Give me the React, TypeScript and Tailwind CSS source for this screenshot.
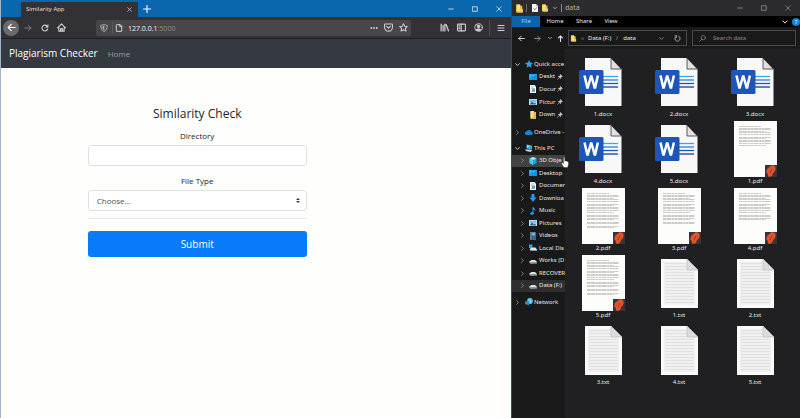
import React, { useState } from "react";

type SvgProps = { className?: string };

/* ---------- Browser toolbar icons ---------- */

const stroke = {
  fill: "none",
  stroke: "currentColor",
  strokeLinecap: "round" as const,
  strokeLinejoin: "round" as const,
};

const ArrowLeft = ({ className }: SvgProps) => (
  <svg viewBox="0 0 16 16" className={className} {...stroke} strokeWidth="2">
    <path d="M14.5 8H2M7.5 2.5 2 8l5.5 5.5" />
  </svg>
);
const ArrowRight = ({ className }: SvgProps) => (
  <svg viewBox="0 0 16 16" className={className} {...stroke} strokeWidth="2">
    <path d="M1.500 8H14M8.500 2.500 14 8l-5.500 5.500" />
  </svg>
);
const ArrowUp = ({ className }: SvgProps) => (
  <svg viewBox="0 0 16 16" className={className} {...stroke} strokeWidth="2.4">
    <path d="M8 15V2M3.500 6.500 8 2l4.500 4.500" />
  </svg>
);
const Reload = ({ className }: SvgProps) => (
  <svg viewBox="0 0 16 16" className={className} {...stroke} strokeWidth="2.2">
    <path d="M13.300 10A5.800 5.800 0 1 1 12 4" />
    <path d="M14.500 1v6h-6z" fill="currentColor" strokeWidth="0.500" />
  </svg>
);
const Refresh = ({ className }: SvgProps) => (
  <svg viewBox="0 0 16 16" className={className} {...stroke} strokeWidth="2">
    <path d="M10.500 2.500a6 6 0 1 1-5 0M2.500 1.500l3.500.7-.8 3.600" />
  </svg>
);
const Home = ({ className }: SvgProps) => (
  <svg viewBox="0 0 16 16" className={className} {...stroke} strokeWidth="2">
    <path d="M1 8.500 8 1.500l7 7M3.300 8v6.500h9.400V8M6.500 14v-4h3v4" />
  </svg>
);
const Shield = ({ className }: SvgProps) => (
  <svg viewBox="0 0 16 16" className={className} {...stroke} strokeWidth="1.8">
    <path d="M8 1C6 2.300 4 2.600 1.500 2.600 1.500 8.500 3.200 13 8 15c4.800-2 6.500-6.500 6.500-12.400C12 2.600 10 2.300 8 1Z" />
    <path d="M8 4.500c-1 .6-2 .8-3 .8.200 3 1 5 3 6.200z" fill="currentColor" strokeWidth="0.800" />
  </svg>
);
const Page = ({ className }: SvgProps) => (
  <svg viewBox="0 0 16 16" className={className} {...stroke} strokeWidth="2">
    <path d="M9.500 1.200H3.500a1 1 0 0 0-1 1v11.600a1 1 0 0 0 1 1h9a1 1 0 0 0 1-1V5.200zM9.500 1.200v4h4" />
  </svg>
);
const Pocket = ({ className }: SvgProps) => (
  <svg viewBox="0 0 16 16" className={className} {...stroke} strokeWidth="1.900">
    <path d="M2.200 1.800h11.600a1.200 1.200 0 0 1 1.200 1.200v4.500a7 7 0 0 1-14 0V3a1.200 1.200 0 0 1 1.200-1.200Z" />
    <path d="M4.700 6 8 9.200 11.300 6" />
  </svg>
);
const Star = ({ className }: SvgProps) => (
  <svg viewBox="0 0 16 16" className={className} {...stroke} strokeWidth="1.800">
    <path d="m8 1.200 2.100 4.400 4.800.6-3.500 3.300.9 4.900L8 12l-4.300 2.400.9-4.900L1.100 6.200l4.800-.6z" />
  </svg>
);
const Library = ({ className }: SvgProps) => (
  <svg viewBox="0 0 16 16" className={className} {...stroke} strokeWidth="2.200">
    <path d="M2 2v12M5.500 4v10M8.700 2v12M11 3l4 11" />
  </svg>
);
const SidebarIcon = ({ className }: SvgProps) => (
  <svg viewBox="0 0 16 16" className={className} {...stroke} strokeWidth="1.900">
    <rect x="1" y="2" width="14" height="12" rx="1.500" />
    <path d="M7.500 2v12M3.500 5h1.500M3.500 7.500h1.500M3.500 10h1.500" />
  </svg>
);
const Account = ({ className }: SvgProps) => (
  <svg viewBox="0 0 16 16" className={className} {...stroke} strokeWidth="1.600">
    <circle cx="8" cy="8" r="6.800" />
    <circle cx="8" cy="6" r="2.400" fill="currentColor" />
    <path d="M3.800 12c1-2.200 7.400-2.200 8.400 0-2 2.500-6.400 2.500-8.400 0Z" fill="currentColor" />
  </svg>
);
const Menu = ({ className }: SvgProps) => (
  <svg viewBox="0 0 16 16" className={className} {...stroke} strokeWidth="2.200">
    <path d="M2 3h12M2 8h12M2 13h12" />
  </svg>
);
const Dots = ({ className }: SvgProps) => (
  <svg viewBox="0 0 16 16" className={className} fill="currentColor">
    <circle cx="2.500" cy="8" r="1.900" />
    <circle cx="8" cy="8" r="1.900" />
    <circle cx="13.500" cy="8" r="1.900" />
  </svg>
);
const Cross = ({ className }: SvgProps) => (
  <svg viewBox="0 0 16 16" className={className} {...stroke} strokeWidth="2.200">
    <path d="m2 2 12 12M14 2 2 14" />
  </svg>
);
const Plus = ({ className }: SvgProps) => (
  <svg viewBox="0 0 16 16" className={className} {...stroke} strokeWidth="2.200">
    <path d="M8 1v14M1 8h14" />
  </svg>
);
const Minimize = ({ className }: SvgProps) => (
  <svg viewBox="0 0 16 16" className={className} {...stroke} strokeWidth="2.400">
    <path d="M2 8h12" />
  </svg>
);
const Maximize = ({ className }: SvgProps) => (
  <svg viewBox="0 0 16 16" className={className} {...stroke} strokeWidth="2.400">
    <path d="M2 2h12v12H2z" />
  </svg>
);
const Chevron = ({ className }: SvgProps) => (
  <svg viewBox="0 0 16 16" className={className} {...stroke} strokeWidth="2.600">
    <path d="m2 5 6 6 6-6" />
  </svg>
);
const ChevronRight = ({ className }: SvgProps) => (
  <svg viewBox="0 0 16 16" className={className} {...stroke} strokeWidth="2.600">
    <path d="m5 2 6 6-6 6" />
  </svg>
);
const Search = ({ className }: SvgProps) => (
  <svg viewBox="0 0 16 16" className={className} {...stroke} strokeWidth="1.600">
    <circle cx="9.800" cy="6.200" r="4.800" />
    <path d="M6.300 9.700 1 15" />
  </svg>
);
const Pin = ({ className }: SvgProps) => (
  <svg viewBox="0 0 16 16" className={className} {...stroke} strokeWidth="1.600">
    <path d="M9.500 1.500 14.500 6.500 12.500 7 10 9.500l-.5 3L3.500 6.500l3-.5L9 3.500z" fill="currentColor" />
    <path d="M6 10 1.500 14.500" />
  </svg>
);

/* ---------- Explorer icons ---------- */

const Folder = ({ className }: SvgProps) => (
  <svg viewBox="0 0 16 16" className={className}>
    <path d="M2 1h7l1 2h3v12H2z" fill="#e3b94a" />
    <path d="M3 1h6v12H3z" fill="#fbe08a" />
    <path d="M9 9h5v6H4v-2h5z" fill="#f5cf62" />
  </svg>
);
const CheckedPage = ({ className }: SvgProps) => (
  <svg viewBox="0 0 16 16" className={className}>
    <path d="M2 0h8l4 4v12H2z" fill="#f4f4f4" />
    <path d="M10 0v4h4z" fill="#b9b9b9" />
    <path d="m5 9 2.500 2.500L12 6.500" fill="none" stroke="#666" strokeWidth="1.800" />
  </svg>
);

type PlaceKind =
  | "star" | "desktop" | "document" | "picture" | "folder" | "cloud" | "pc"
  | "cube" | "download" | "music" | "video" | "system" | "drive" | "network";

const placeArt: Record<PlaceKind, React.ReactNode> = {
  star: <path d="m8 0 2.400 5.200 5.600.7-4.200 3.900 1.200 5.700L8 12.600l-5 2.900 1.200-5.700L0 5.900l5.600-.7z" fill="#2ba0f0" />,
  desktop: (
    <>
      <path d="M0 2h16v12H0z" fill="#1793dc" />
      <path d="M0 2h16L0 12z" fill="#28aef0" />
    </>
  ),
  document: (
    <>
      <path d="M2 0h9l3 3v13H2z" fill="#f3f6f8" />
      <path d="M4 4h5M4 7h8M4 13h8" stroke="#8aa0b0" strokeWidth="1.200" />
      <path d="M6 8.500h6v4H6z" fill="#3c97cf" />
    </>
  ),
  picture: (
    <>
      <path d="M0 2h16v12H0z" fill="#dceaf4" />
      <path d="M1 3h14v6H1z" fill="#7fbdea" />
      <path d="m1 13 5-6 4 4 2-2 3 4z" fill="#2c5f88" />
    </>
  ),
  folder: (
    <>
      <path d="M3 0h7l1 2h3v14H3z" fill="#e3b94a" />
      <path d="M3 0h6v13H3z" fill="#fbe08a" />
    </>
  ),
  cloud: <path d="M3.500 14a3.400 3.400 0 0 1-.4-6.800A5 5 0 0 1 12 6.500a3.800 3.800 0 0 1 .5 7.500z" fill="#1685d9" />,
  pc: (
    <>
      <path d="m3 1 11 2v8L3 9z" fill="#35aef0" />
      <path d="m4 2.500 5 1-5 5z" fill="#9fe0ff" />
      <path d="m0 11 9 0 6 2-4 3-9-2z" fill="#c9d4dc" />
    </>
  ),
  cube: (
    <>
      <path d="m8 0 7 3v9l-7 4-7-4V3z" fill="#18a5d8" />
      <path d="m8 0 7 3-7 3-7-3z" fill="#a9ecfa" />
      <path d="M1 3v9l7 4V6z" fill="#4cc8ea" />
    </>
  ),
  download: <path d="M5 0h6v7h4l-7 9-7-9h4z" fill="#2b95e6" />,
  music: (
    <>
      <path d="M7 0h2c.5 3 5 4 4 8-.5-2-2-3-4-3v8H7z" fill="#2ba0f0" />
      <ellipse cx="6" cy="13" rx="3.500" ry="2.700" fill="#2ba0f0" />
    </>
  ),
  video: (
    <>
      <path d="M2 0h12v16H2z" fill="#56636e" />
      <path d="M5 1h7v6H5z" fill="#5bb3e8" />
      <path d="M5 8.500h7V15H5z" fill="#365f9c" />
      <path d="M3.500 1v14" stroke="#e0e0e0" strokeWidth="1" strokeDasharray="1.500 1.500" />
    </>
  ),
  system: (
    <>
      <path d="M0 1h7v7H0z" fill="#22a9ee" />
      <path d="M1 10 6 7h7l3 4v3H4z" fill="#dfe4e7" />
      <path d="M4 12h12v2H4z" fill="#8a9297" />
    </>
  ),
  drive: (
    <>
      <path d="M0 9.500 5 6h7l4 4v2.500L3 13z" fill="#dfe2e4" />
      <path d="M0 10h16v2.500L3 13z" fill="#92979a" />
    </>
  ),
  network: (
    <>
      <circle cx="10" cy="6" r="5.800" fill="#58b9ee" />
      <path d="M7 2c3 2 5 5 5 9" stroke="#c4ecff" strokeWidth="1.400" fill="none" />
      <path d="m0 6 8 2v7l-8-3z" fill="#2389d4" />
    </>
  ),
};

const PlaceIcon = ({ kind }: { kind: PlaceKind }) => (
  <svg viewBox="0 0 16 16" className="size-2 shrink-0">{placeArt[kind]}</svg>
);

const WordFile = () => (
  <svg viewBox="0 0 48 48" className="size-12" role="img" aria-label="Word document">
    <path d="M6 0h26l10.500 11v37H6z" fill="#f8f8f8" />
    <path d="M32 0v11h10.500z" fill="#e2e2e2" stroke="#333" strokeWidth="0.800" />
    <path d="M42.500 0H32l10.500 11z" fill="#202022" />
    <path d="M24 18.500h15" stroke="#41a5ee" strokeWidth="1.300" />
    <path d="M24 22h15" stroke="#2b7cd3" strokeWidth="1.300" />
    <path d="M24 25.500h15" stroke="#185abd" strokeWidth="1.300" />
    <path d="M24 29h15" stroke="#103f91" strokeWidth="1.300" />
    <rect x="0" y="12" width="24.500" height="24" rx="1.500" fill="#1d56b8" />
    <path d="m5.500 17.500 3 13 3.700-13 3.700 13 3-13" fill="none" stroke="#fff" strokeWidth="2.500" strokeLinejoin="bevel" />
  </svg>
);

const pdfLines = [5, 7, 8, 10, 11, 13, 16, 17, 19, 20, 22, 24, 27, 28, 30, 31, 34, 35, 38, 39];

const PdfFile = ({ lines }: { lines: number }) => (
  <svg viewBox="0 0 43 56" className="h-14 w-[43px]" role="img" aria-label="PDF document">
    <path d="M0 0h43v56H0z" fill="#fdfdfc" />
    {pdfLines.slice(0, lines).map((y, i) => (
      <path
        key={y}
        d={`M5 ${y + 0.5}h${i === 0 ? 22 : i % 4 === 3 ? 27 : 32}`}
        stroke="#a9a9a9"
        strokeWidth="0.600"
        strokeDasharray="3 .4 5 .5 2 .4"
      />
    ))}
    <path d="M31 44h12v12H31z" fill="#353638" />
    <path d="M36 45.500c2-2.200 6.500-1.200 5.500 3-.4 2-1.500 3-2.500 3.500-.2 3-2.500 4.800-5 3.200l-.3-2.500-1.200-.7c-.5-3 1-5 2.500-5.500z" fill="#e4522b" />
    <path d="M38 48 36 52" stroke="#8c2f18" strokeWidth="0.800" />
  </svg>
);

const TextFile = () => (
  <svg viewBox="0 0 37 49" className="h-[49px] w-[37px]" role="img" aria-label="Text document">
    <path d="M0 0h26l11 11v38H0z" fill="#fafafa" />
    <path d="M3 3h23l8 9v34H3z" fill="#f0f0f0" />
    {[4, 7, 10, 13, 16, 19, 22, 25, 28, 31, 34, 37, 40, 43].map((y) => (
      <path key={y} d={`M4 ${y + 0.5}h${y < 12 ? 21 : 29}`} stroke="#dedede" strokeWidth="0.900" />
    ))}
    <path d="M26 0v11h11z" fill="#dcdcdc" stroke="#b5b5b5" strokeWidth="0.600" />
  </svg>
);

/* ---------- Browser window ---------- */

function BrowserWindow() {
  const [dir, setDir] = useState("");
  return (
    <section className="flex min-w-0 flex-col border-l border-[#9fb6ca] bg-[#fefefd]">
      <header className="flex h-[17px] items-end bg-[#0a67ae] text-white">
        <div className="ml-5 flex h-[15px] w-[117px] items-center justify-between bg-[#323135] pr-[6px] pl-[5px] text-[6px]">
          <span className="text-[#e4e4e6]">Similarity App</span>
          <button aria-label="Close tab" className="text-[#dcdcde]"><Cross className="size-[5px]" /></button>
        </div>
        <button aria-label="New tab" className="flex h-4 w-[18px] items-center justify-center"><Plus className="size-2" /></button>
        <div className="ml-auto flex h-full items-center text-[#cfe0ee]">
          <button aria-label="Minimize" className="flex w-6 justify-center"><Minimize className="size-[6px]" /></button>
          <button aria-label="Maximize" className="flex w-6 justify-center"><Maximize className="size-[6px]" /></button>
          <button aria-label="Close" className="flex w-6 justify-center"><Cross className="size-[6px]" /></button>
        </div>
      </header>

      <div className="flex h-[22px] items-center border-b border-[#1f1f21] bg-[#323135] text-[#d0d0d2]">
        <button aria-label="Back" className="ml-[2px] flex size-4 items-center justify-center rounded-full bg-[#6a6a6d] text-white"><ArrowLeft className="size-[9px]" /></button>
        <button aria-label="Forward" className="flex w-[18px] justify-center text-[#7b7b7f]"><ArrowRight className="size-2" /></button>
        <button aria-label="Reload" className="flex w-4 justify-center"><Reload className="size-2" /></button>
        <button aria-label="Home" className="flex w-4 justify-center"><Home className="size-[9px]" /></button>
        <div className="ml-[27px] flex h-4 min-w-0 flex-1 items-center rounded-xs bg-[#474649] pl-1">
          <Shield className="size-2 shrink-0 text-[#b8b8bb]" />
          <span className="mr-[2px] ml-1 h-3 w-px bg-[#5a5a5d]" />
          <Page className="size-2 shrink-0" />
          <div role="textbox" aria-label="Address" className="ml-[5px] min-w-0 flex-1 pt-px text-[7px] leading-[9px] text-[#929296]">
            <span className="text-[#f0f0f2]">127.0.0.1</span>:5000
          </div>
          <button aria-label="Page actions" className="flex w-[14px] justify-center"><Dots className="size-2" /></button>
          <button aria-label="Save to Pocket" className="flex w-[15px] justify-center"><Pocket className="size-[9px]" /></button>
          <button aria-label="Bookmark" className="mr-px flex w-[14px] justify-center"><Star className="size-[9px]" /></button>
        </div>
        <div className="ml-[25px] flex items-center">
          <button aria-label="Library" className="flex w-[17px] justify-center"><Library className="size-[9px]" /></button>
          <button aria-label="Sidebars" className="flex w-[17px] justify-center"><SidebarIcon className="size-[9px]" /></button>
          <button aria-label="Account" className="flex w-[17px] justify-center"><Account className="size-[9px]" /></button>
          <span className="ml-[2px] h-4 w-px bg-[#4d4d50]" />
          <button aria-label="Menu" className="flex w-[21px] justify-center"><Menu className="size-2" /></button>
        </div>
      </div>

      <nav className="flex h-[29px] items-center gap-[10px] bg-[#343a40] px-2">
        <a href="#top" className="text-[10px] text-white">Plagiarism Checker</a>
        <a href="#home" className="text-[8px] text-[#9a9da0]">Home</a>
      </nav>

      <main className="flex-1 pt-[38px] pl-[17%] text-[#212529]">
        <form className="w-full max-w-[219px] text-center text-[8px]" onSubmit={(e) => e.preventDefault()}>
          <h1 className="text-[12px] leading-4">Similarity Check</h1>
          <label htmlFor="directory" className="mt-2 block leading-3">Directory</label>
          <input
            id="directory"
            value={dir}
            onChange={(e) => setDir(e.target.value)}
            className="mt-[3px] block h-[21px] w-full rounded-[3px] border border-[#dfe2e5] bg-white px-2 outline-none"
          />
          <label htmlFor="filetype" className="mt-[9px] block leading-3">File Type</label>
          <div className="relative mt-[3px]">
            <select
              id="filetype"
              className="block h-[21px] w-full appearance-none rounded-[3px] border border-[#dfe2e5] bg-white px-2 text-[#495057] outline-none"
            >
              <option>Choose...</option>
              <option>docx</option>
              <option>pdf</option>
              <option>txt</option>
            </select>
            <svg viewBox="0 0 4 5" className="pointer-events-none absolute top-2 right-[7px] h-[5px] w-1">
              <path fill="#343a40" d="M2 0 0 2h4zm0 5L0 3h4z" />
            </svg>
          </div>
          <hr className="mt-[7px] border-[#e9e9ea]" />
          <button className="mt-3 h-[26px] w-full rounded-[3px] bg-[#087bfb] text-[10px] text-white">Submit</button>
        </form>
      </main>
    </section>
  );
}

/* ---------- Explorer window ---------- */

type Place = { label: string; kind: PlaceKind; pinned?: boolean; state?: "hover" | "selected" };

const quick: Place[] = [
  { label: "Deskt", kind: "desktop", pinned: true },
  { label: "Docur", kind: "document", pinned: true },
  { label: "Pictur", kind: "picture", pinned: true },
  { label: "Down", kind: "folder", pinned: true },
];

const pc: Place[] = [
  { label: "3D Obje", kind: "cube", state: "hover" },
  { label: "Desktop", kind: "desktop" },
  { label: "Documer", kind: "document" },
  { label: "Downloa", kind: "download" },
  { label: "Music", kind: "music" },
  { label: "Pictures", kind: "picture" },
  { label: "Videos", kind: "video" },
  { label: "Local Dis", kind: "system" },
  { label: "Works (D", kind: "drive" },
  { label: "RECOVER", kind: "drive" },
  { label: "Data (F:)", kind: "drive", state: "selected" },
];

function RootRow({ label, kind, open }: { label: string; kind: PlaceKind; open?: boolean }) {
  return (
    <button className="flex h-3 w-full items-center pl-[3px] text-left whitespace-nowrap">
      {open ? <Chevron className="size-[5px] shrink-0" /> : <ChevronRight className="size-[5px] shrink-0 text-[#9a9a9a]" />}
      <span className="mr-px ml-[5px] flex"><PlaceIcon kind={kind} /></span>
      <span>{label}</span>
    </button>
  );
}

function ChildRow({ label, kind, pinned, state }: Place) {
  const bg = state === "hover" ? "bg-[#424242]" : state === "selected" ? "bg-[#2f2f2f]" : "";
  return (
    <div className={`relative min-h-0 ${bg}`}>
      <button className="flex h-full w-full items-center pl-2 text-left whitespace-nowrap">
        {pinned ? <span className="w-[5px] shrink-0" /> : <ChevronRight className="size-[5px] shrink-0 text-[#9a9a9a]" />}
        <span className="mr-[2px] ml-1 flex"><PlaceIcon kind={kind} /></span>
        <span className="min-w-0 flex-1">{label}</span>
        {pinned && <Pin className="mr-[2px] size-[6px] shrink-0 text-[#c8c8c8]" />}
      </button>
      {state === "hover" && (
        <svg viewBox="0 0 16 22" className="absolute top-[2px] -right-1 z-10 h-[11px] w-2">
          <path
            d="M5 1.500c0-1.200 2.600-1.200 2.600 0V8c.3-1 2.400-.8 2.400.5.4-.8 2.400-.5 2.400.8.500-.7 2.600-.3 2.600 1V15c0 2-1.500 3-1.500 6H5.500c0-2.500-4.500-6-4.500-8.500 0-1.500 2-1.500 4 .5z"
            fill="#fff"
            stroke="#222"
            strokeWidth="0.800"
          />
        </svg>
      )}
    </div>
  );
}

type FileItem = { name: string; lines?: number };

const files: FileItem[] = [
  { name: "1.docx" }, { name: "2.docx" }, { name: "3.docx" },
  { name: "4.docx" }, { name: "5.docx" }, { name: "1.pdf", lines: 12 },
  { name: "2.pdf", lines: 20 }, { name: "3.pdf", lines: 18 }, { name: "4.pdf", lines: 16 },
  { name: "5.pdf", lines: 20 }, { name: "1.txt" }, { name: "2.txt" },
  { name: "3.txt" }, { name: "4.txt" }, { name: "5.txt" },
];

function FileTile({ name, lines }: FileItem) {
  return (
    <button className="flex flex-col items-center pb-[2px]">
      <span className="flex h-14 items-center">
        {name.endsWith("docx") ? <WordFile /> : name.endsWith("pdf") ? <PdfFile lines={lines ?? 12} /> : <TextFile />}
      </span>
      <span className="leading-[9px]">{name}</span>
    </button>
  );
}

function ExplorerWindow() {
  return (
    <section className="flex min-w-0 flex-col border-l border-[#24506b] bg-[#191919] font-['Noto_Sans','Open_Sans',sans-serif] text-[6px] text-[#e8e8e8]">
      <header className="flex h-4 items-center bg-[#2b2a2c]">
        <Folder className="ml-[3px] size-[9px]" />
        <span className="mr-1 ml-[2px] h-2 w-px bg-[#6b6b6b]" />
        <CheckedPage className="size-2" />
        <Folder className="ml-[2px] size-2" />
        <Chevron className="ml-1 size-1" />
        <span className="mr-[3px] ml-1 h-2 w-px bg-[#8a8a8a]" />
        <span className="text-[7px] text-[#b4b4b4]">data</span>
        <div className="ml-auto flex items-center text-[#87878a]">
          <button aria-label="Minimize" className="flex w-6 justify-center"><Minimize className="size-[6px]" /></button>
          <button aria-label="Maximize" className="flex w-6 justify-center"><Maximize className="size-[6px]" /></button>
          <button aria-label="Close" className="flex w-6 justify-center"><Cross className="size-[6px]" /></button>
        </div>
      </header>

      <div className="flex h-[11px] items-center bg-black">
        <button className="h-full w-7 bg-[#0a64ad] text-[#a9cdf0]">File</button>
        <button className="w-[30px]">Home</button>
        <button className="w-7">Share</button>
        <button className="w-[26px]">View</button>
        <Chevron className="mr-1 ml-auto size-[6px]" />
        <button aria-label="Help" className="flex size-2 items-center justify-center rounded-full bg-[#1683dc] text-[6px] leading-none text-white">?</button>
      </div>

      <div className="flex h-[22px] items-center">
        <button aria-label="Back" className="ml-[6px] flex"><ArrowLeft className="size-[7px]" /></button>
        <button aria-label="Forward" className="ml-[9px] flex text-[#9b9b9b]"><ArrowRight className="size-[7px]" /></button>
        <button aria-label="Recent" className="ml-[7px] flex"><Chevron className="size-1" /></button>
        <button aria-label="Up" className="ml-[5px] flex"><ArrowUp className="size-[7px]" /></button>
        <div className="ml-1 flex h-4 flex-1 items-center border border-[#4a4a4a] pl-px">
          <Folder className="size-[7px]" />
          <span className="mx-1 text-[#8c8c8c]">«</span>
          <button>Data (F:)</button>
          <ChevronRight className="mx-1 size-1 text-[#9a9a9a]" />
          <button>data</button>
          <button aria-label="History" className="ml-auto flex text-[#9a9a9a]"><Chevron className="size-[5px]" /></button>
          <button aria-label="Refresh" className="mr-[5px] ml-[10px] flex text-[#b0b0b0]"><Refresh className="size-[7px]" /></button>
        </div>
        <label className="mr-1 ml-[5px] flex h-4 w-[104px] items-center border border-[#4a4a4a] pl-[6px] text-[#8c8c8c]">
          <Search className="size-[7px] shrink-0" />
          <input aria-label="Search data" placeholder="Search data" className="ml-[7px] w-full min-w-0 bg-transparent outline-none placeholder:text-[#8c8c8c]" />
        </label>
      </div>

      <div className="flex min-h-0 flex-1">
        <aside className="w-[53px] shrink-0 pt-[9px]">
          <div className="grid h-[63px] grid-cols-1 grid-rows-5">
            <RootRow label="Quick acce" kind="star" open />
            {quick.map((p) => <ChildRow key={p.label} {...p} />)}
          </div>
          <div className="pt-[5px]"><RootRow label="OneDrive -" kind="cloud" /></div>
          <div className="mt-1 grid h-[150px] grid-cols-1 grid-rows-12">
            <RootRow label="This PC" kind="pc" open />
            {pc.map((p) => <ChildRow key={p.label} {...p} />)}
          </div>
          <div className="pt-1"><RootRow label="Network" kind="network" /></div>
        </aside>
        <div className="flex-1 bg-[#202022] pt-[5px] pr-[7px]">
          <div className="grid grid-cols-3">
            {files.map((f) => <FileTile key={f.name} {...f} />)}
          </div>
        </div>
      </div>
    </section>
  );
}

export default function App() {
  return (
    <div className="grid min-h-screen grid-cols-[511fr_289fr] bg-[#191919] font-['Open_Sans','Noto_Sans',sans-serif]">
      <BrowserWindow />
      <ExplorerWindow />
    </div>
  );
}
